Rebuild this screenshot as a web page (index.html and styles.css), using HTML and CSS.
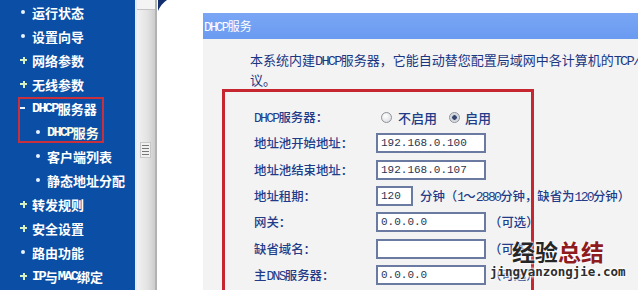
FILE: index.html
```html
<!DOCTYPE html>
<html lang="zh-CN">
<head>
<meta charset="utf-8">
<title>DHCP服务</title>
<link rel="stylesheet" href="styles.css">
</head>
<body>
<div class="app">
  <nav class="sidebar">
    <ul class="menu">
      <li class="item"><span class="mark"><i class="dot"></i></span>运行状态</li>
      <li class="item"><span class="mark"><i class="dot"></i></span>设置向导</li>
      <li class="item"><span class="mark"><i class="plus"></i></span>网络参数</li>
      <li class="item"><span class="mark"><i class="plus"></i></span>无线参数</li>
      <li class="item"><span class="mark"><i class="minus"></i></span><span class="en">DHCP</span>服务器</li>
      <li class="item sub active"><span class="mark"><i class="dot"></i></span><span class="en">DHCP</span>服务</li>
      <li class="item sub"><span class="mark"><i class="dot"></i></span>客户端列表</li>
      <li class="item sub"><span class="mark"><i class="dot"></i></span>静态地址分配</li>
      <li class="item"><span class="mark"><i class="plus"></i></span>转发规则</li>
      <li class="item"><span class="mark"><i class="plus"></i></span>安全设置</li>
      <li class="item"><span class="mark"><i class="dot"></i></span>路由功能</li>
      <li class="item"><span class="mark"><i class="plus"></i></span><span class="en">IP</span>与<span class="en">MAC</span>绑定</li>
    </ul>
    <div class="annot"></div>
  </nav>
  <div class="scrollbar">
    <div class="sb-btn"></div>
    <div class="sb-thumb">
      <div class="sb-grip"><i></i><i></i><i></i><i></i></div>
    </div>
  </div>
  <main class="content">
    <svg class="corner" width="12" height="11" viewBox="0 0 12 11"><path d="M0 0 H9 Q3 4 0 11 Z" fill="#132f6e"/></svg>
    <section class="panel">
      <header class="panel-head"><span class="en">DHCP</span>服务</header>
      <div class="panel-body">
        <p class="intro"><span class="line">本系统内建<span class="en">DHCP</span>服务器，它能自动替您配置局域网中各计算机的<span class="en">TCP/IP</span>协</span><span class="line">议。</span></p>
        <div class="formbox">
          <div class="form-grid">
            <div class="lbl"><span class="en">DHCP</span>服务器：</div>
            <div class="val">
              <span class="radio"></span><span class="rtext">不启用</span>
              <span class="radio checked"></span><span class="rtext">启用</span>
            </div>
            <div class="lbl">地址池开始地址：</div>
            <div class="val"><span class="input">192.168.0.100</span></div>
            <div class="lbl">地址池结束地址：</div>
            <div class="val"><span class="input">192.168.0.107</span></div>
            <div class="lbl">地址租期：</div>
            <div class="val"><span class="input short">120</span><span class="note">分钟（<span class="en">1</span>～<span class="en">2880</span>分钟，缺省为<span class="en">120</span>分钟）</span></div>
            <div class="lbl">网关：</div>
            <div class="val"><span class="input">0.0.0.0</span><span class="opt">（可选）</span></div>
            <div class="lbl">缺省域名：</div>
            <div class="val"><span class="input"></span><span class="opt">（可选）</span></div>
            <div class="lbl">主<span class="en">DNS</span>服务器：</div>
            <div class="val"><span class="input">0.0.0.0</span><span class="opt">（可选）</span></div>
            <div class="lbl">备用<span class="en">DNS</span>服务器：</div>
            <div class="val"><span class="input">0.0.0.0</span><span class="opt">（可选）</span></div>
          </div>
        </div>
      </div>
    </section>
  </main>
  <div class="watermark">
    <div class="wm-cn"><span class="wm-a">经验</span><span class="wm-b">总结</span></div>
    <div class="wm-en">jingyanzongjie.com</div>
  </div>
</div>
</body>
</html>
```
FILE: styles.css
```css
html, body {
  margin: 0;
  padding: 0;
  width: 640px;
  height: 290px;
  overflow: hidden;
  background: #ffffff;
}

.app {
  position: relative;
  display: flex;
  width: 640px;
  height: 290px;
  font-family: "Noto Sans CJK SC", "Liberation Sans", sans-serif;
}

.en {
  font-family: "Liberation Mono", monospace;
  font-size: 1.05em;
  letter-spacing: -0.13em;
}

/* ---------- sidebar ---------- */
.sidebar {
  position: relative;
  width: 135px;
  flex: none;
  background: #0b4ea5;
}

.menu {
  list-style: none;
  margin: 0;
  padding: 0;
}

.item {
  display: flex;
  align-items: center;
  height: 24px;
  padding-left: 18px;
  color: #ffffff;
  font-size: 13px;
  font-weight: bold;
  white-space: nowrap;
}

.item.sub {
  padding-left: 33px;
}

.mark {
  display: flex;
  align-items: center;
  width: 14px;
  height: 24px;
  flex: none;
}

.dot {
  display: block;
  width: 4px;
  height: 4px;
  margin-left: 3px;
  border-radius: 50%;
  background: #e8f4ff;
}

.plus {
  position: relative;
  display: block;
  width: 7px;
  height: 7px;
  margin-left: 2px;
}
.plus::before,
.plus::after {
  content: "";
  position: absolute;
  background: #d6f0c4;
}
.plus::before { left: 0; top: 2.5px; width: 7px; height: 2px; }
.plus::after { left: 2.5px; top: 0; width: 2px; height: 7px; }

.minus {
  display: block;
  width: 6px;
  height: 2px;
  margin-left: 1px;
  background: #e8f4ff;
}

.item.active {
  color: #fbfbe6;
}

.annot {
  position: absolute;
  left: 18px;
  top: 97px;
  width: 82px;
  height: 42px;
  border: 2px solid #c9303e;
}

/* ---------- scrollbar ---------- */
.scrollbar {
  display: flex;
  flex-direction: column;
  width: 18px;
  flex: none;
  border-left: 2px solid #e4ebf4;
  border-right: 2px solid #b2b2b2;
  background: linear-gradient(to right, #f2f2f2, #e2e2e2 60%, #cdcdcd);
}

.sb-btn {
  height: 9px;
  border-bottom: 1px solid #c4c4c4;
  background: #f4f4f4;
}

.sb-thumb {
  flex: 1;
  display: flex;
  align-items: center;
  justify-content: center;
}

.sb-grip {
  display: flex;
  flex-direction: column;
  gap: 2px;
  padding: 2px 1px;
  margin-right: 2px;
  border: 1px solid #c8c8c8;
  background: #f0f0f0;
}
.sb-grip i {
  display: block;
  width: 7px;
  height: 1px;
  background: #777;
}

/* ---------- content ---------- */
.content {
  position: relative;
  flex: 1;
  padding: 13px 0 0 46px;
  background: #ffffff;
  overflow: hidden;
}

.corner {
  position: absolute;
  left: 1px;
  top: 0;
}

.panel {
  width: 435px;
  height: 290px;
  overflow: hidden;
  background: #f3f3f4;
}

.panel-head {
  height: 26px;
  line-height: 26px;
  padding-left: 1px;
  background: linear-gradient(#7aa6f4, #6a9bf1);
  color: #ffffff;
  font-size: 12px;
}

.panel-body {
  padding: 12px 0 0 19px;
}

.intro {
  margin: 0;
  padding-left: 28px;
  font-size: 13px;
  line-height: 18px;
  color: #1a3683;
}
.intro .line {
  display: block;
  white-space: nowrap;
}

.formbox {
  width: 312px;
  height: 240px;
  padding: 12px 0 0 29px;
  box-sizing: border-box;
  border: 3px solid #c6262f;
}

.form-grid {
  display: grid;
  grid-template-columns: 122px auto;
  grid-auto-rows: 26.3px;
  align-items: center;
}

.lbl {
  font-size: 12.4px;
  font-weight: 500;
  color: #213b88;
  white-space: nowrap;
}

.val {
  display: flex;
  align-items: center;
  white-space: nowrap;
  color: #213b88;
  font-weight: 500;
}

.radio {
  width: 11px;
  height: 11px;
  box-sizing: border-box;
  margin-left: 5px;
  border-radius: 50%;
  border: 1px solid #8d9198;
  background: radial-gradient(circle at 40% 35%, #ffffff, #d5d7dc);
}
.radio.checked {
  margin-left: 12px;
  background: radial-gradient(circle, #34466e 0 2px, #c9ced8 2.5px, #f4f5f7);
}

.rtext {
  margin-left: 6px;
  font-size: 13px;
}
.radio.checked + .rtext {
  margin-left: 5px;
}

.input {
  display: block;
  width: 110px;
  height: 20px;
  box-sizing: border-box;
  padding-left: 3px;
  border: 2px solid #6b7aa1;
  background: #ffffff;
  font-family: "Liberation Mono", monospace;
  font-size: 11px;
  font-weight: normal;
  line-height: 16px;
  color: #2b3550;
}
.input.short {
  width: 37px;
}

.note {
  margin-left: 7px;
  font-size: 12.4px;
}

.opt {
  margin-left: 3px;
  font-size: 12.4px;
}

/* ---------- watermark ---------- */
.watermark {
  position: absolute;
  left: 490px;
  top: 240px;
}

.wm-cn {
  margin-left: 22px;
  font-size: 23px;
  line-height: 23px;
  font-weight: bold;
  text-shadow: 0 0 2px #ffffff, 0 0 2px #ffffff, 0 0 3px #ffffff;
}
.wm-a { color: #262626; }
.wm-b { color: #8e1b1d; }

.wm-en {
  margin-top: 1px;
  font-family: "DejaVu Sans Mono", monospace;
  font-size: 12.5px;
  line-height: 15px;
  font-weight: bold;
  color: #2e2e2e;
  text-shadow: 0 0 2px #ffffff, 0 0 3px #ffffff, 0 0 4px #ffffff, 0 0 4px #ffffff;
}
```
